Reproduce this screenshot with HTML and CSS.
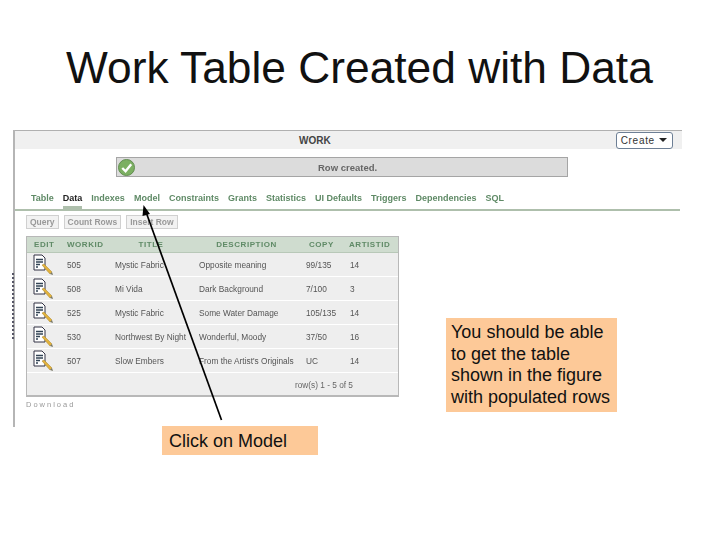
FILE: index.html
```html
<!DOCTYPE html>
<html lang="en">
<head>
<meta charset="utf-8">
<title>Work Table Created with Data</title>
<link rel="stylesheet" href="styles.css">
</head>
<body>
<svg width="0" height="0" class="defs">
  <symbol id="edit" viewBox="0 0 20 22">
    <path d="M1 1H9L12 4V16H1Z" fill="#fff" stroke="#334" stroke-width="1"/>
    <path d="M3 5.500H10M3 8H10M3 10.500H7M3 13H5" stroke="#345" stroke-width="1.400"/>
    <path d="M9 11L11 10L19 18L17 20Z" fill="#e2b23c" stroke="#a8842c" stroke-width=".5"/>
    <path d="M17 20L19 18L20 21Z" fill="#776"/>
  </symbol>
</svg>
<main class="slide">
  <h1 class="title">Work Table Created with Data</h1>
  <section class="shot">
    <div class="shot-head">
      <span class="shot-name">WORK</span>
      <span class="create">Create <i class="caret"></i></span>
    </div>
    <div class="msg">
      <svg class="ok" viewBox="0 0 18 18"><circle cx="9" cy="9" r="8.500" fill="#7cb062" stroke="#5f8a4e"/><path d="M4.500 9.500L8 13L14 5.500" fill="none" stroke="#fff" stroke-width="2.500"/></svg>
      <span class="msg-text">Row created.</span>
    </div>
    <nav class="tabs">
      <a>Table</a><a class="on">Data</a><a>Indexes</a><a>Model</a><a>Constraints</a><a>Grants</a><a>Statistics</a><a>UI Defaults</a><a>Triggers</a><a>Dependencies</a><a>SQL</a>
    </nav>
    <div class="btns"><span>Query</span><span>Count Rows</span><span>Insert Row</span></div>
    <div class="report">
      <div class="row hdr">
        <span>EDIT</span><span>WORKID</span><span class="c">TITLE</span><span class="c">DESCRIPTION</span><span class="copy">COPY</span><span class="artist">ARTISTID</span>
      </div>
      <div class="row"><svg class="ico"><use href="#edit"/></svg><span>505</span><span>Mystic Fabric</span><span>Opposite meaning</span><span>99/135</span><span>14</span></div>
      <div class="row"><svg class="ico"><use href="#edit"/></svg><span>508</span><span>Mi Vida</span><span>Dark Background</span><span>7/100</span><span>3</span></div>
      <div class="row"><svg class="ico"><use href="#edit"/></svg><span>525</span><span>Mystic Fabric</span><span>Some Water Damage</span><span>105/135</span><span>14</span></div>
      <div class="row"><svg class="ico"><use href="#edit"/></svg><span>530</span><span>Northwest By Night</span><span>Wonderful, Moody</span><span>37/50</span><span>16</span></div>
      <div class="row"><svg class="ico"><use href="#edit"/></svg><span>507</span><span>Slow Embers</span><span>From the Artist's Originals</span><span>UC</span><span>14</span></div>
      <div class="pager">row(s) 1 - 5 of 5</div>
    </div>
    <div class="download">Download</div>
    <div class="ticks"></div>
  </section>
  <svg class="arrow" viewBox="0 0 720 540">
    <path d="M221.500 420L146 212" stroke="#000" stroke-width="1.700" fill="none"/>
    <path d="M143.500 205L150 214L142.500 216Z" fill="#000"/>
  </svg>
  <div class="note note-model">Click on Model</div>
  <div class="note note-table">You should be able to get the table shown in the figure with populated rows</div>
</main>
</body>
</html>
```
FILE: styles.css
```css
* { box-sizing: border-box; }
html, body { margin: 0; padding: 0; background: #fff; }
.defs { position: absolute; }
.slide {
  position: relative;
  width: 720px;
  height: 540px;
  overflow: hidden;
  font-family: "Liberation Sans", Arial, sans-serif;
  color: #000;
}
.title {
  margin: 0;
  padding: 43px 0 0 66px;
  height: 130px;
  font-size: 44.300px;
  line-height: 50px;
  font-weight: 400;
  color: #111;
  white-space: nowrap;
}
.shot {
  position: relative;
  margin-left: 13px;
  width: 669px;
  height: 297px;
  border-left: 2px solid #b5b5b5;
  font-family: "Liberation Sans", Arial, sans-serif;
  font-size: 8.300px;
  color: #555;
  filter: blur(.4px);
}
.shot-head {
  height: 19px;
  background: #f0f0f0;
  border-top: 1px solid #b0b0b0;
  display: flex;
  align-items: center;
  position: relative;
}
.shot-name {
  margin-left: 284px;
  font-weight: 700;
  font-size: 10px;
  color: #444;
}
.create {
  margin-left: 285px;
  width: 57px;
  height: 17px;
  background: #fff;
  border: 1px solid #6d7f95;
  border-radius: 3px;
  font-size: 10px;
  letter-spacing: .7px;
  color: #333;
  display: flex;
  align-items: center;
  padding-left: 4px;
  gap: 4px;
}
.caret {
  width: 0;
  height: 0;
  border: 4px solid transparent;
  border-top-color: #222;
  border-bottom: 0;
}
.msg {
  margin: 8px 0 0 101px;
  width: 452px;
  height: 20px;
  background: #dcdcdc;
  border: 1px solid #a5a5a5;
  display: flex;
  align-items: center;
  position: relative;
}
.ok { width: 17px; height: 17px; margin-left: 1px; }
.msg-text {
  margin-left: 183px;
  font-weight: 700;
  font-size: 9.500px;
  color: #666;
}
.tabs {
  margin-top: 14px;
  height: 20px;
  width: 665px;
  padding: 0 0 0 16px;
  display: flex;
  gap: 9px;
  align-items: flex-start;
  border-bottom: 2px solid #aebfac;
  font-size: 9px;
  font-weight: 700;
  line-height: 14px;
  color: #5f8a66;
}
.tabs a { display: block; height: 18px; white-space: nowrap; }
.tabs .on { color: #222; border-bottom: 3px solid #aebfac; }
.btns {
  margin: 4px 0 0 11px;
  display: flex;
  gap: 5px;
}
.btns span {
  height: 14px;
  padding: 0 3px;
  line-height: 13px;
  background: #f2f2f2;
  border: 1px solid #d0d0d0;
  color: #999;
  font-size: 8.500px;
  font-weight: 700;
}
.report {
  margin: 7px 0 0 11px;
  width: 373px;
  height: 161px;
  background: #eee;
  border: 1px solid #b8b8b8;
  border-bottom-width: 2px;
}
.row {
  display: grid;
  grid-template-columns: 40px 48px 84px 107px 44px 48px;
  height: 24px;
  align-items: center;
  border-bottom: 1px solid #fff;
  color: #555;
  white-space: nowrap;
}
.row span:first-of-type { grid-column: 2; }
.row .ico { width: 20px; height: 22px; margin-left: 6px; }
.hdr {
  height: 16px;
  background: #cfdccf;
  color: #5f8a66;
  font-weight: 700;
  font-size: 8px;
  letter-spacing: .55px;
  border-bottom: 1px solid #b8c8b8;
}
.hdr span:first-of-type { grid-column: 1; padding-left: 7px; }
.hdr .c { text-align: center; padding-right: 12px; }
.hdr .copy { padding-left: 3px; }
.hdr .artist { margin-left: -1px; }
.pager { text-align: right; padding: 7px 45px 0 0; color: #666; }
.download {
  margin: 3px 0 0 11px;
  font-size: 7.500px;
  letter-spacing: 2px;
  color: #999;
}
.ticks {
  position: absolute;
  left: -3px;
  top: 143px;
  height: 66px;
  border-left: 2px dotted #556;
}
.arrow {
  position: absolute;
  left: 0;
  top: 0;
  width: 720px;
  height: 540px;
}
.note {
  position: absolute;
  background: #fdc998;
  font-size: 18px;
  color: #111;
}
.note-model {
  left: 162px;
  top: 426px;
  width: 156px;
  height: 29px;
  padding: 4px 0 0 7px;
  line-height: 22px;
}
.note-table {
  left: 446px;
  top: 318px;
  width: 171px;
  height: 94px;
  padding: 4px 0 0 5px;
  line-height: 21.600px;
}
```
